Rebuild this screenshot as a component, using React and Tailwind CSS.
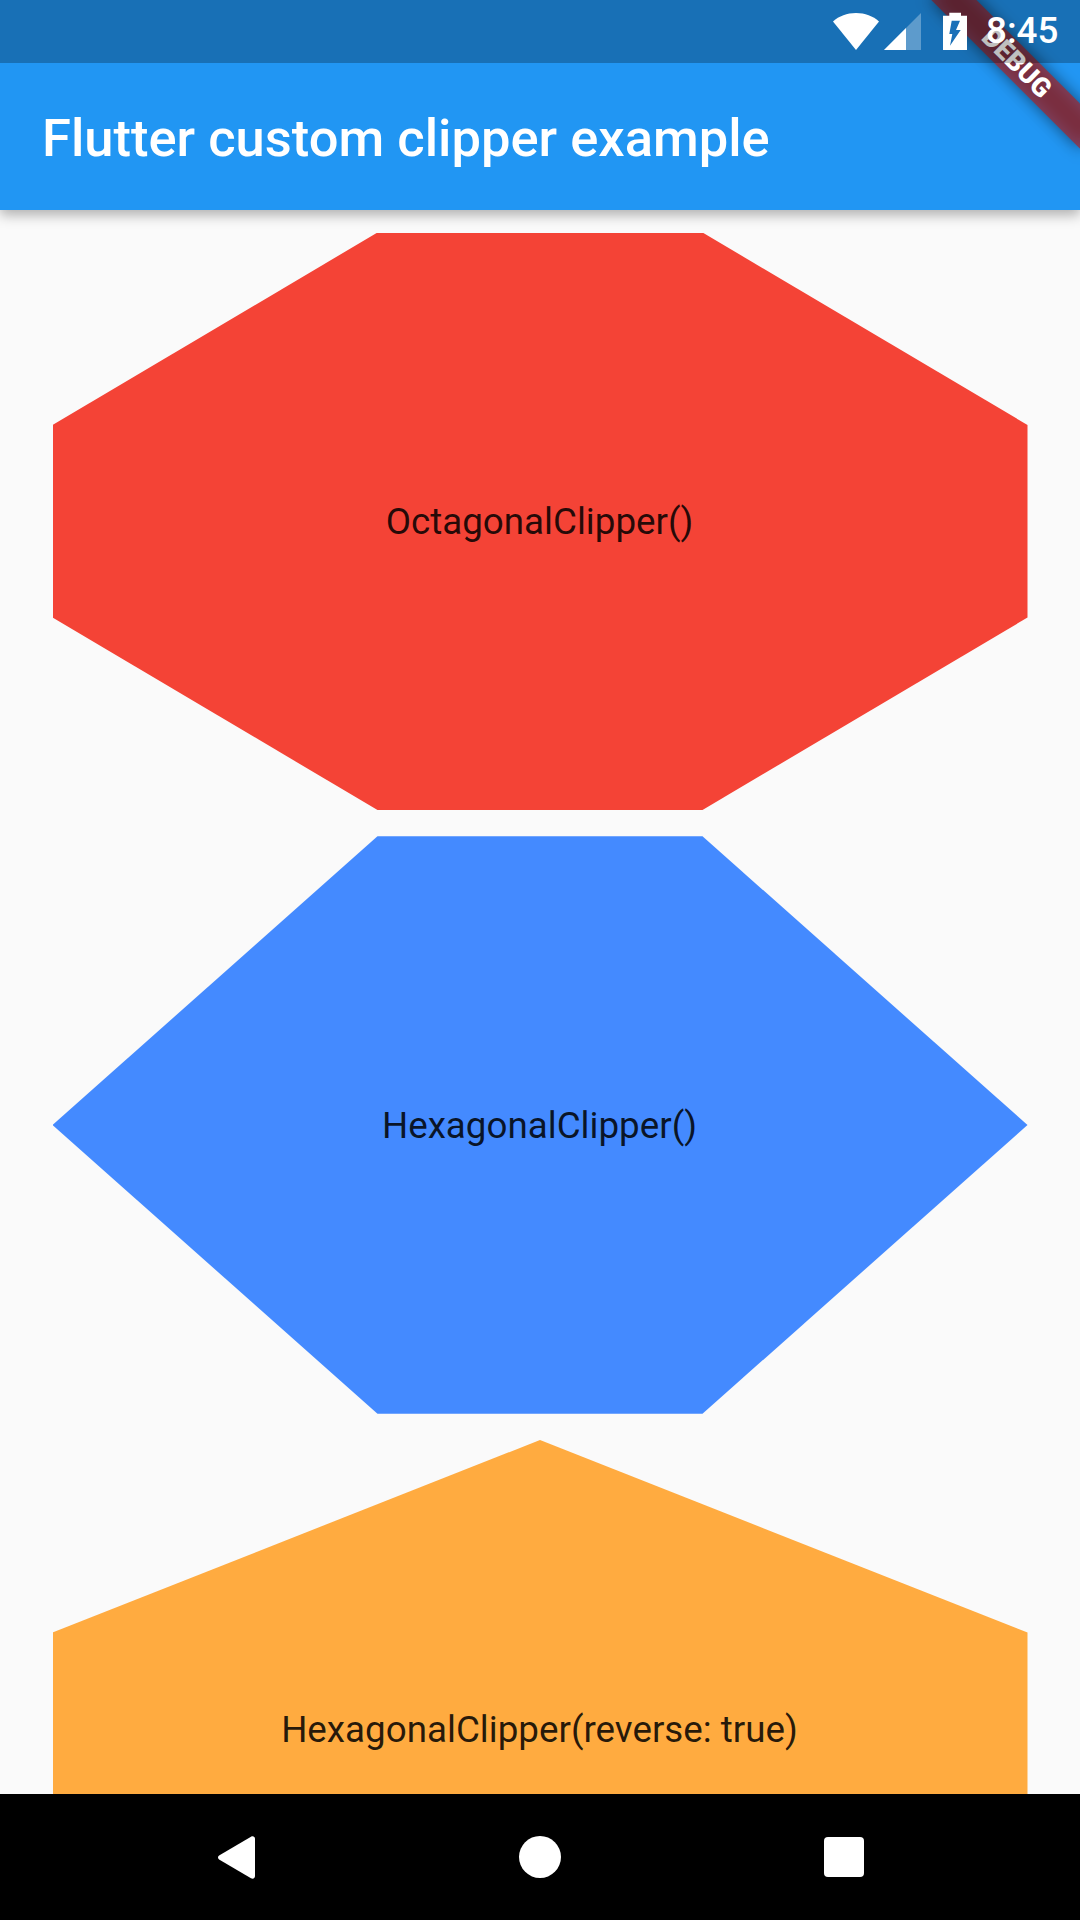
const roboto = "font-['Roboto',sans-serif]";

function Shape({ color, clip, label }) {
  return (
    <div className={`${color} ${clip} ${roboto} flex h-[577.5px] w-full shrink-0 items-center justify-center pr-[1px] pt-[1px] text-[36.75px] leading-[43px] text-black/85`}>
      {label}
    </div>
  );
}

export default function App() {
  return (
    <div className="relative flex h-[1920px] w-[1080px] flex-col overflow-hidden bg-[#fafafa]">
      <header className="relative shrink-0 bg-[#2196f3] shadow-[0_5px_12px_rgba(0,0,0,0.3)]">
        <div className="relative z-40 flex h-[63px] items-center bg-black/25 pl-[833px]">
          <svg width="46" height="37" viewBox="0 0 46 37" className="mt-[-1px] shrink-0">
            <path d="M0 8.500C6 3 14 0 23 0s17 3 23 8.500L23 37Z" fill="#fff" />
          </svg>
          <svg width="37" height="37" viewBox="0 0 37 37" className="ml-[5px] mt-[-1px] shrink-0">
            <path d="M37 0V37H0Z" fill="#fff" fillOpacity="0.3" />
            <path d="M22 15V37H0Z" fill="#fff" />
          </svg>
          <svg width="24" height="38" viewBox="0 0 24 38" className="ml-[22px] mt-[-1px] shrink-0">
            <path d="M6.300 .7H18V3.700H24V38H0V3.700H6.300Z" fill="#fff" />
            <path d="M8.700 8.700H17L13 18H17.700L7 33.700 9.300 22H6.300Z" fill="#1a70b8" />
          </svg>
          <span className={`${roboto} ml-[19px] text-[36.75px] font-medium leading-none text-white`}>8:45</span>
        </div>
        <div className="flex h-[147px] items-center pl-[42px] pt-[3px]">
          <span className={`${roboto} text-[52.5px] font-medium leading-none text-white`}>Flutter custom clipper example</span>
        </div>
      </header>

      <main className="flex min-h-0 flex-1 flex-col gap-[26.25px] overflow-hidden px-[52.5px] pt-[22.5px]">
        <Shape color="bg-[#f44336]" clip="[clip-path:polygon(33.333%_0,66.667%_0,100%_33.333%,100%_66.667%,66.667%_100%,33.333%_100%,0_66.667%,0_33.333%)]" label="OctagonalClipper()" />
        <Shape color="bg-[#448aff]" clip="[clip-path:polygon(33.333%_0,66.667%_0,100%_50%,66.667%_100%,33.333%_100%,0_50%)]" label="HexagonalClipper()" />
        <Shape color="bg-[#ffab40]" clip="[clip-path:polygon(50%_0,100%_33.333%,100%_66.667%,50%_100%,0_66.667%,0_33.333%)]" label="HexagonalClipper(reverse: true)" />
      </main>

      <nav className="relative z-10 flex h-[126px] shrink-0 items-center justify-center gap-[262px] bg-black">
        <div className="flex w-[42px] justify-center">
          <svg width="37" height="43" viewBox="0 0 37 43">
            <path d="M1.500 19.300L33 .8C35 -.3 37 .8 37 3V40C37 42.200 35 43.300 33 42.200L1.500 23.700C-.5 22.500 -.5 20.500 1.500 19.300Z" fill="#fff" />
          </svg>
        </div>
        <div className="flex w-[42px] justify-center">
          <div className="h-[42px] w-[42px] rounded-full bg-white" />
        </div>
        <div className="flex w-[42px] justify-center">
          <div className="h-[40px] w-[40px] rounded-[4px] bg-white" />
        </div>
      </nav>

      <div className="absolute left-[912px] top-[47.250px] z-20 h-[31.500px] w-[210px] rotate-45 bg-black/50 blur-[8px]" />
      <div className={`${roboto} absolute left-[912px] top-[47.250px] z-30 flex h-[31.500px] w-[210px] rotate-45 items-center justify-center bg-[#b71c1c]/[0.63] pt-[2px] text-[26.8px] font-black leading-none text-white`}>
        DEBUG
      </div>
    </div>
  );
}
